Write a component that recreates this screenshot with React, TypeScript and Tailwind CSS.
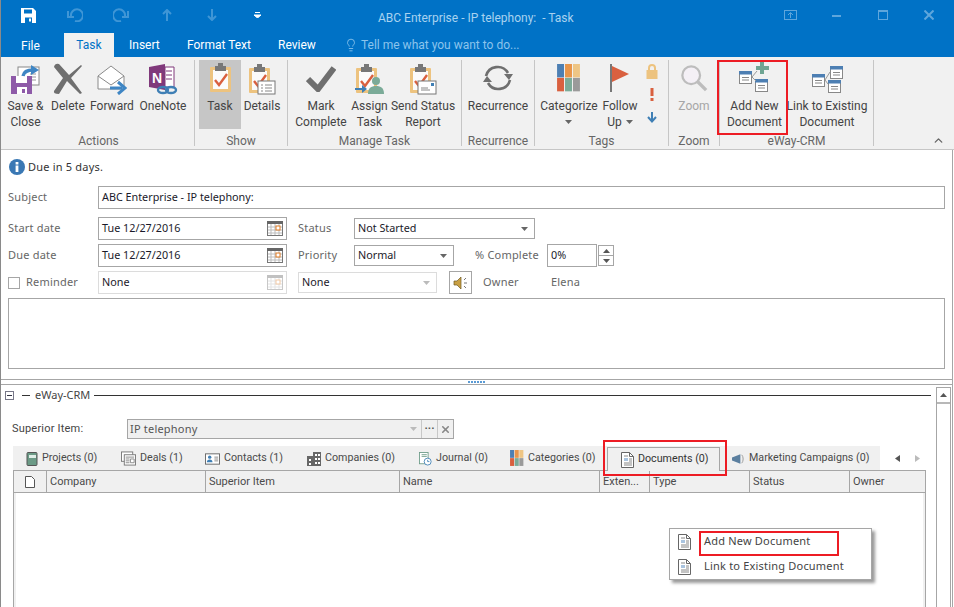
import { ChevronUp, Lightbulb, X } from "lucide-react";

const noto = "font-['Noto_Sans','Liberation_Sans',sans-serif]";
const roboto = "font-['Roboto','Liberation_Sans',sans-serif]";

function Clipboard({ x = 0 }: { x?: number }) {
  return (
    <g transform={`translate(${x} 0)`}>
      <rect x="1" y="4" width="21" height="25" rx="1" fill="#edc37f" />
      <rect x="4" y="7" width="15" height="19" fill="#fbfbfb" />
      <rect x="6" y="3" width="11" height="5" fill="#777" />
      <rect x="9" y="0" width="5" height="4" fill="#777" />
      <path d="M6 17l4 5 8-11" fill="none" stroke="#d9603f" strokeWidth="2.4" />
    </g>
  );
}

function SaveCloseIcon() {
  return (
    <svg width="32" height="30" viewBox="0 0 32 30">
      <rect x="8" y="2" width="21" height="18" fill="#fff" stroke="#888" />
      <path d="M20 9h6M20 12h6M20 15h6" stroke="#999" />
      <path d="M1 11h21v18H1z" fill="#8e5aa8" />
      <rect x="6" y="11" width="11" height="7" fill="#fff" />
      <rect x="7" y="22" width="10" height="7" fill="#fff" />
      <rect x="12" y="24" width="3" height="4" fill="#8e5aa8" />
      <path d="M13 11c1-5 5-6 10-6" fill="none" stroke="#3f86c4" strokeWidth="3.4" />
      <path d="M21 0l8 5-8 5z" fill="#3f86c4" />
    </svg>
  );
}

function DeleteIcon() {
  return (
    <svg width="30" height="32" viewBox="0 0 30 32">
      <path d="M1 4Q2 0 6 1L16 12 28 2l1 1-11 12 11 15-2 1-13-13-8 13Q0 31 1 28l9-13z" fill="#6f6f6f" />
    </svg>
  );
}

function ForwardIcon() {
  return (
    <svg width="30" height="30" viewBox="0 0 30 30">
      <path d="M1 11L14 1l13 10v13H1z" fill="#fff" stroke="#8a8a8a" />
      <path d="M1 11l13 9 13-9" fill="none" stroke="#8a8a8a" />
      <path d="M13 23h12" stroke="#3f86c4" strokeWidth="3" />
      <path d="M21 17l7 6-7 6" fill="none" stroke="#3f86c4" strokeWidth="3" />
    </svg>
  );
}

function OneNoteIcon() {
  return (
    <svg width="30" height="32" viewBox="0 0 30 32">
      <path d="M1 4l16-3v26l-16-3z" fill="#80397b" />
      <path d="M17 4h9v20h-9z" fill="#fff" stroke="#80397b" />
      <path d="M18 8h6M18 12h6M18 16h6" stroke="#80397b" />
      <text x="4" y="20" fontSize="14" fontWeight="700" fill="#fff" fontFamily="Liberation Sans">N</text>
      <ellipse cx="15" cy="27" rx="5" ry="3" fill="none" stroke="#3f7fb5" strokeWidth="2.4" />
      <ellipse cx="23" cy="27" rx="5" ry="3" fill="none" stroke="#3f7fb5" strokeWidth="2.4" />
    </svg>
  );
}

function TaskIcon() {
  return (
    <svg width="23" height="30" viewBox="0 0 23 30" className="mb-[2px]">
      <Clipboard />
    </svg>
  );
}

function DetailsIcon() {
  return (
    <svg width="28" height="31" viewBox="0 0 28 31">
      <Clipboard />
      <rect x="10" y="17" width="17" height="13" fill="#fff" stroke="#777" />
      <path d="M13 21h2M17 21h7M13 24h2M17 24h7M13 27h2M17 27h7" stroke="#888" />
    </svg>
  );
}

function MarkCompleteIcon() {
  return (
    <svg width="30" height="26" viewBox="0 0 30 26" className="mb-[3px]">
      <path d="M2 13l10 10L28 2" fill="none" stroke="#6f6f6f" strokeWidth="6" />
    </svg>
  );
}

function AssignIcon() {
  return (
    <svg width="30" height="31" viewBox="0 0 30 31">
      <Clipboard />
      <circle cx="21" cy="17" r="4" fill="#7bab98" />
      <path d="M13 30c0-6 3-8 8-8s8 2 8 8z" fill="#7bab98" />
      <path d="M0 25h8" stroke="#3f7fb5" strokeWidth="2" />
      <path d="M7 21l5 4-5 4z" fill="#3f7fb5" />
    </svg>
  );
}

function StatusReportIcon() {
  return (
    <svg width="28" height="31" viewBox="0 0 28 31">
      <Clipboard />
      <rect x="9" y="17" width="18" height="13" fill="#fff" stroke="#777" />
      <rect x="22" y="19" width="3" height="3" fill="#3f7fb5" />
      <path d="M12 24h7M12 26h9" stroke="#888" />
    </svg>
  );
}

function RecurrenceIcon() {
  return (
    <svg width="32" height="28" viewBox="0 0 32 28" className="mb-[3px]">
      <path d="M4 12A12 12 0 0 1 26 9M28 16A12 12 0 0 1 6 19" fill="none" stroke="#6f6f6f" strokeWidth="2.6" />
      <path d="M22 10h9l-4 6zM1 18h9l-5-6z" fill="#6f6f6f" />
    </svg>
  );
}

function CategorizeIcon({ size = 24, className = "" }: { size?: number; className?: string }) {
  const colors = ["#4d7fb3", "#e8954a", "#eec584", "#d9603f", "#7bab98", "#9a9a9a"];
  return (
    <svg width={size} height={size * 1.16} viewBox="0 0 24 28" className={className}>
      {colors.map((c, i) => (
        <rect key={c} x={(i % 3) * 8} y={i < 3 ? 0 : 14} width="7" height="13.5" fill={c} />
      ))}
    </svg>
  );
}

function FlagIcon() {
  return (
    <svg width="22" height="29" viewBox="0 0 22 29" className="mb-[2px]">
      <rect x="1" y="0" width="2" height="28" fill="#777" />
      <path d="M3 2l17 8-17 8z" fill="#d9603f" />
    </svg>
  );
}

function ZoomIcon() {
  return (
    <svg width="28" height="28" viewBox="0 0 30 30" className="mb-[3px]">
      <circle cx="12" cy="12" r="9.5" fill="#f4f0f6" stroke="#bdbdbd" strokeWidth="2.4" />
      <path d="M19 19l9 9" stroke="#bdbdbd" strokeWidth="3.6" />
    </svg>
  );
}

function FormBox({ x, y }: { x: number; y: number }) {
  return (
    <g transform={`translate(${x} ${y})`}>
      <rect x="0.5" y="0.5" width="12" height="12" fill="#fff" stroke="#888" />
      <rect x="0" y="0" width="13" height="3.5" fill="#4d7fb3" />
      <path d="M3 6.5h7M3 9h7" stroke="#888" />
    </g>
  );
}

function AddDocIcon() {
  return (
    <svg width="31" height="31" viewBox="0 0 31 31" className="mb-[3px]">
      <FormBox x={0} y={10} />
      <FormBox x={16} y={18} />
      <path d="M13 16l5-6M13 16l4 4" stroke="#999" fill="none" />
      <path d="M21 1h4v4h5v4h-5v4h-4V9h-4V5h4z" fill="#6fa593" />
    </svg>
  );
}

function LinkDocIcon() {
  return (
    <svg width="31" height="31" viewBox="0 0 31 31" className="mb-[2px]">
      <FormBox x={0} y={12} />
      <FormBox x={18} y={4} />
      <FormBox x={16} y={18} />
      <path d="M13 18l5-8M13 18l3 4" stroke="#999" fill="none" />
    </svg>
  );
}

function DocIcon() {
  return (
    <svg width="13" height="16" viewBox="0 0 13 16">
      <path d="M0.5 0.5h8l4 4v11H0.5z" fill="#fff" stroke="#666" />
      <path d="M8.5 0.5v4h4" fill="none" stroke="#666" />
      <rect x="3" y="6" width="4" height="3" fill="#a9c4e0" />
      <path d="M3 4h4M8 7h3M8 9h3M3 11h8M3 13h8" stroke="#888" />
    </svg>
  );
}

function CalendarIcon({ disabled = false }: { disabled?: boolean }) {
  return (
    <svg width="16" height="15" viewBox="0 0 16 15" className={`mt-px ${disabled ? "opacity-40" : ""}`}>
      <rect x="0.5" y="0.5" width="15" height="14" fill="#fff" stroke="#777" />
      <rect x="0" y="0" width="16" height="3" fill="#666" />
      <path d="M1 6h14M1 9h14M1 12h14M4 3v11M8 3v11M12 3v11" stroke="#bbb" />
      <rect x="9" y="5" width="4" height="4" fill="#fff" stroke="#e07b22" />
    </svg>
  );
}

function TinyTriangle({ className = "" }: { className?: string }) {
  return (
    <svg width="7" height="4" viewBox="0 0 7 4" className={className}>
      <path d="M0 0h7L3.5 4z" fill="currentColor" />
    </svg>
  );
}

function RibbonButton({
  icon,
  lines,
  width,
  active = false,
  muted = false,
  caret = false,
}: {
  icon: React.ReactNode;
  lines: React.ReactNode[];
  width: number;
  active?: boolean;
  muted?: boolean;
  caret?: boolean;
}) {
  return (
    <div
      className={`flex h-[69px] shrink-0 flex-col items-center ${active ? "bg-[#c6c6c6]" : ""}`}
      style={{ width }}
    >
      <div className="flex h-[36px] shrink-0 items-end justify-center pb-px">{icon}</div>
      <div className={`mt-[2px] whitespace-nowrap text-center text-[12px] leading-[16px] ${muted ? "text-[#a6a6a6]" : "text-[#444]"}`}>
        {lines.map((l, i) => (
          <div key={i} className="flex items-center justify-center gap-[4px]">
            {l}
          </div>
        ))}
        {caret && (
          <div className="flex h-[16px] items-center justify-center">
            <TinyTriangle className="text-[#666]" />
          </div>
        )}
      </div>
    </div>
  );
}

function RibbonGroup({
  label,
  width,
  inset = 0,
  children,
}: {
  label: string;
  width: number;
  inset?: number;
  children: React.ReactNode;
}) {
  return (
    <div className="my-[3px] flex shrink-0 flex-col border-r border-[#c6c6c6]" style={{ width }}>
      <div className="flex h-[69px]" style={{ paddingLeft: inset }}>
        {children}
      </div>
      <div className="mt-[4px] text-center text-[12px] leading-[16px] text-[#666]">{label}</div>
    </div>
  );
}

function Ribbon() {
  return (
    <div className="flex h-[93px] shrink-0 border-b border-[#c6c6c6] bg-[#f1f1f1] pl-[2px]">
      <RibbonGroup label="Actions" width={192}>
        <RibbonButton icon={<SaveCloseIcon />} lines={["Save &", "Close"]} width={45} />
        <RibbonButton icon={<DeleteIcon />} lines={["Delete"]} width={40} />
        <RibbonButton icon={<ForwardIcon />} lines={["Forward"]} width={48} />
        <RibbonButton icon={<OneNoteIcon />} lines={["OneNote"]} width={54} />
      </RibbonGroup>
      <RibbonGroup label="Show" width={93} inset={4}>
        <RibbonButton icon={<TaskIcon />} lines={["Task"]} width={42} active />
        <RibbonButton icon={<DetailsIcon />} lines={["Details"]} width={42} />
      </RibbonGroup>
      <RibbonGroup label="Manage Task" width={174} inset={3}>
        <RibbonButton icon={<MarkCompleteIcon />} lines={["Mark", "Complete"]} width={60} />
        <RibbonButton icon={<AssignIcon />} lines={["Assign", "Task"]} width={37} />
        <RibbonButton icon={<StatusReportIcon />} lines={["Send Status", "Report"]} width={70} />
      </RibbonGroup>
      <RibbonGroup label="Recurrence" width={73} inset={1}>
        <RibbonButton icon={<RecurrenceIcon />} lines={["Recurrence"]} width={70} />
      </RibbonGroup>
      <RibbonGroup label="Tags" width={134} inset={2}>
        <RibbonButton icon={<CategorizeIcon className="mb-[3px]" />} lines={["Categorize"]} width={64} caret />
        <RibbonButton
          icon={<FlagIcon />}
          lines={[
            "Follow",
            <>
              Up
              <TinyTriangle className="text-[#666]" />
            </>,
          ]}
          width={38}
        />
        <div className="flex w-[26px] flex-col items-center pt-[4px]">
          <svg width="12" height="15" viewBox="0 0 12 15">
            <path d="M3 7V4a3 3 0 0 1 6 0v3" fill="none" stroke="#edc37f" strokeWidth="2" />
            <rect x="0.5" y="6" width="11" height="9" fill="#edc37f" />
          </svg>
          <svg width="4" height="13" viewBox="0 0 4 13" className="mt-[9px]">
            <path d="M0.5 0h3v8h-3zM0.5 10h3v3h-3z" fill="#d9603f" />
          </svg>
          <svg width="10" height="11" viewBox="0 0 10 11" className="mt-[11px]">
            <path d="M5 0v9M1 5l4 4.5L9 5" fill="none" stroke="#3f7fb5" strokeWidth="2" />
          </svg>
        </div>
      </RibbonGroup>
      <RibbonGroup label="Zoom" width={51}>
        <RibbonButton icon={<ZoomIcon />} lines={["Zoom"]} width={50} muted />
      </RibbonGroup>
      <RibbonGroup label="eWay-CRM" width={154}>
        <RibbonButton icon={<AddDocIcon />} lines={["Add New", "Document"]} width={69} />
        <RibbonButton icon={<LinkDocIcon />} lines={["Link to Existing", "Document"]} width={76} />
      </RibbonGroup>
      <div className="flex flex-1 items-end justify-end pb-[2px] pr-[9px]">
        <ChevronUp size={13} strokeWidth={2.5} className="text-[#666]" />
      </div>
    </div>
  );
}

function TitleBar() {
  return (
    <div className="flex h-[57px] shrink-0 flex-col bg-[#0072c6] text-white">
      <div className="flex h-[33px] items-center pb-[3px]">
        <svg width="15" height="15" viewBox="0 0 15 15" className="ml-[20px]">
          <path d="M0 0h12l3 3v12H0z" fill="#fff" />
          <path d="M3 1.5h8v4H3zM4 9.5h7V15H4z" fill="#0072c6" />
          <rect x="8" y="10.5" width="2" height="3" fill="#fff" />
        </svg>
        <svg width="16" height="14" viewBox="0 0 16 14" className="ml-[31px] text-[#3f96d6]">
          <path d="M4 8A6 6 0 1 1 8 13M1 3v6h6" fill="none" stroke="currentColor" strokeWidth="2" />
        </svg>
        <svg width="16" height="14" viewBox="0 0 16 14" className="ml-[30px] text-[#3f96d6]">
          <path d="M12 8A6 6 0 1 0 8 13M15 3v6H9" fill="none" stroke="currentColor" strokeWidth="2" />
        </svg>
        <svg width="10" height="12" viewBox="0 0 10 12" className="ml-[33px] text-[#3f96d6]">
          <path d="M5 12V1M1 5l4-4 4 4" fill="none" stroke="currentColor" strokeWidth="2" />
        </svg>
        <svg width="10" height="12" viewBox="0 0 10 12" className="ml-[35px] text-[#3f96d6]">
          <path d="M5 0v11M1 7l4 4 4-4" fill="none" stroke="currentColor" strokeWidth="2" />
        </svg>
        <svg width="7" height="6" viewBox="0 0 7 6" className="ml-[37px]">
          <path d="M1 0.5h5M0 3h7L3.5 6z" stroke="#fff" fill="#fff" strokeWidth="1" />
        </svg>
        <div className="ml-[117px] mt-[6px] whitespace-nowrap text-[12px] leading-[20px] text-[#a8d2f0]">
          ABC Enterprise - IP telephony:&nbsp; - Task
        </div>
        <div className="ml-auto mr-[20px] flex items-center text-[#5ea6dc]">
          <svg width="13" height="10" viewBox="0 0 13 10">
            <rect x="0.5" y="0.5" width="12" height="9" fill="none" stroke="currentColor" />
            <path d="M6.5 8V3M4 5l2.5-2.5L9 5" fill="none" stroke="currentColor" />
          </svg>
          <svg width="9" height="2" viewBox="0 0 9 2" className="ml-[35px] mt-[2px]">
            <rect width="9" height="2" fill="currentColor" />
          </svg>
          <svg width="10" height="10" viewBox="0 0 10 10" className="ml-[37px]">
            <rect x="0.5" y="0.5" width="9" height="9" fill="none" stroke="currentColor" />
            <rect x="0" y="0" width="10" height="2" fill="currentColor" />
          </svg>
          <svg width="10" height="10" viewBox="0 0 10 10" className="ml-[36px]">
            <path d="M0.5 0.5l9 9M9.5 0.5l-9 9" stroke="currentColor" strokeWidth="2" />
          </svg>
        </div>
      </div>
      <div className="flex h-[24px] items-end text-[12px]">
        <div className="flex h-[24px] w-[63px] items-center pl-[20px] pt-[2px]">File</div>
        <div className="flex h-[24px] w-[50px] items-center justify-center bg-[#f1f1f1] text-[#0072c6]">Task</div>
        <div className="flex h-[24px] w-[73px] items-center pl-[15px]">Insert</div>
        <div className="flex h-[24px] w-[91px] items-center">Format Text</div>
        <div className="flex h-[24px] w-[66px] items-center">Review</div>
        <div className="flex h-[24px] items-center gap-[3px] text-[#8cc4ec]">
          <Lightbulb size={14} strokeWidth={1.5} />
          Tell me what you want to do...
        </div>
      </div>
    </div>
  );
}

function Field({ width, value, disabled = false, calendar = false }: { width: number; value: string; disabled?: boolean; calendar?: boolean }) {
  return (
    <div
      className={`flex h-[23px] shrink-0 items-center justify-between border pb-px pl-[3px] pr-[3px] text-[10.8px] text-[#1a1a2a] ${disabled ? "border-[#dcdcdc]" : "border-[#a6a6a6]"}`}
      style={{ width }}
    >
      <span>{value}</span>
      {calendar && <CalendarIcon disabled={disabled} />}
    </div>
  );
}

function Select({ width, value, disabled = false }: { width: number; value: string; disabled?: boolean }) {
  return (
    <div
      className={`flex h-[21px] shrink-0 items-center justify-between border pl-[3px] pr-[6px] text-[10.8px] text-[#1a1a2a] ${disabled ? "border-[#dcdcdc]" : "border-[#a6a6a6]"}`}
      style={{ width }}
    >
      <span>{value}</span>
      <TinyTriangle className={disabled ? "text-[#bbb]" : "text-[#666]"} />
    </div>
  );
}

function Form() {
  const label = "text-[11px] text-[#666] tracking-[0.2px]";
  return (
    <div className={`flex h-[230px] shrink-0 flex-col border-b border-[#a6a6a6] pl-[7px] ${noto}`}>
      <div className="flex h-[36px] items-center gap-[3px] pb-[2px] pl-px">
        <svg width="16" height="16" viewBox="0 0 16 16">
          <circle cx="8" cy="8" r="8" fill="#3a78b4" />
          <rect x="6.6" y="6.5" width="2.8" height="6.5" fill="#fff" />
          <rect x="6.6" y="3" width="2.8" height="2.5" fill="#fff" />
        </svg>
        <span className="text-[11px] tracking-[0.2px] text-[#333]">Due in 5 days.</span>
      </div>
      <div className="flex items-center">
        <span className={`${label} w-[90px]`}>Subject</span>
        <Field width={847} value="ABC Enterprise - IP telephony:" />
      </div>
      <div className="mt-[8px] flex items-center">
        <span className={`${label} w-[90px]`}>Start date</span>
        <Field width={189} value="Tue 12/27/2016" calendar />
        <span className={`${label} ml-[11px] w-[56px]`}>Status</span>
        <Select width={181} value="Not Started" />
      </div>
      <div className="mt-[4px] flex items-center">
        <span className={`${label} w-[90px]`}>Due date</span>
        <Field width={189} value="Tue 12/27/2016" calendar />
        <span className={`${label} ml-[11px] w-[56px]`}>Priority</span>
        <Select width={100} value="Normal" />
        <span className={`${label} ml-[21px] w-[72px]`}>% Complete</span>
        <Field width={50} value="0%" />
        <div className="ml-px flex h-[21px] w-[16px] flex-col border border-[#a6a6a6]">
          <div className="flex flex-1 items-center justify-center border-b border-[#a6a6a6]">
            <TinyTriangle className="rotate-180 text-[#555]" />
          </div>
          <div className="flex flex-1 items-center justify-center">
            <TinyTriangle className="text-[#555]" />
          </div>
        </div>
      </div>
      <div className="mt-[4px] flex items-center">
        <div className="h-[12px] w-[12px] border border-[#a6a6a6]" />
        <span className={`${label} ml-[6px] w-[72px]`}>Reminder</span>
        <Field width={189} value="None" disabled calendar />
        <div className="ml-[11px]">
          <Select width={139} value="None" disabled />
        </div>
        <div className="ml-[12px] flex h-[23px] w-[23px] items-center justify-center border border-[#a6a6a6]">
          <svg width="16" height="14" viewBox="0 0 16 14">
            <path d="M1 5h3l4-4v12l-4-4H1z" fill="#c9a043" stroke="#6f5a24" strokeWidth="0.7" />
            <path d="M11 4l2-2M11 7h3M11 10l2 2" stroke="#777" />
          </svg>
        </div>
        <span className={`${label} ml-[11px] w-[68px]`}>Owner</span>
        <span className={label}>Elena</span>
      </div>
      <div className="mt-[4px] h-[71px] w-[937px] border border-[#a6a6a6]" />
    </div>
  );
}

function Tab({ icon, label, width, inset = 13, active = false }: { icon: React.ReactNode; label: string; width: number; inset?: number; active?: boolean }) {
  return (
    <div
      className={`flex h-[24px] shrink-0 items-center gap-[4px] whitespace-nowrap text-[10.7px] ${
        active ? "relative z-10 -mb-px mt-px border-x border-t border-[#a6a6a6] bg-[#f0f0f0] text-[#333]" : "pt-px text-[#4a4a4a]"
      }`}
      style={{ width, paddingLeft: inset }}
    >
      {icon}
      {label}
    </div>
  );
}

const columns = [
  { name: "Company", w: 159 },
  { name: "Superior Item", w: 194 },
  { name: "Name", w: 200 },
  { name: "Exten...", w: 50 },
  { name: "Type", w: 100 },
  { name: "Status", w: 100 },
  { name: "Owner", w: 75 },
];

function CrmPanel() {
  return (
    <div className="flex min-h-0 flex-1">
      <div className="flex w-[930px] shrink-0 flex-col pl-[4px]">
        <div className="mt-[5px] flex h-[11px] items-center">
          <div className="flex h-[9px] w-[9px] items-center justify-center border border-[#778] bg-white">
            <div className="h-px w-[5px] bg-[#334]" />
          </div>
          <div className="ml-[8px] h-px w-[8px] bg-[#333]" />
          <span className={`ml-[5px] text-[11px] text-[#444] ${noto}`}>eWay-CRM</span>
          <div className="ml-[4px] h-px flex-1 bg-[#333]" />
        </div>
        <div className="ml-[7px] mt-[18px] flex h-[20px] items-center">
          <span className="w-[115px] pt-px text-[11px] tracking-[0.2px] text-[#444]">Superior Item:</span>
          <div className="flex h-[20px] w-[327px] items-center border border-[#a6a6a6] bg-[#f0f0f0]">
            <span className={`flex-1 pl-[2px] text-[11px] tracking-[0.2px] text-[#555] ${noto}`}>IP telephony</span>
            <div className="flex h-full w-[16px] items-center justify-center border-r border-[#c8c8c8]">
              <TinyTriangle className="text-[#bbb]" />
            </div>
            <div className="flex h-full w-[16px] items-center justify-center border-r border-[#c8c8c8] pb-[2px] text-[11px] font-bold leading-none text-[#555]">
              ···
            </div>
            <div className="flex h-full w-[15px] items-center justify-center">
              <X size={11} strokeWidth={3.5} className="text-[#888]" />
            </div>
          </div>
        </div>
        <div className="ml-[8px] mt-[7px] flex h-[24px]">
          <div className="flex w-[867px] bg-[#f0f0f0]">
            <Tab
              label="Projects (0)"
              width={95}
              icon={
                <svg width="12" height="14" viewBox="0 0 12 14">
                  <rect x="1" y="0.5" width="10" height="13" rx="1" fill="#6b9a86" stroke="#555" />
                  <rect x="3" y="3" width="7" height="3" fill="#dfeee7" />
                </svg>
              }
            />
            <Tab
              label="Deals (1)"
              width={84}
              icon={
                <svg width="15" height="15" viewBox="0 0 16 15">
                  <rect x="0.5" y="0.5" width="12" height="10" fill="#fff" stroke="#777" />
                  <rect x="3.5" y="3.5" width="12" height="11" fill="#fff" stroke="#777" />
                  <path d="M5 6h9M5 8h4M5 10h4M5 12h4M10 8h4v4h-4z" stroke="#888" fill="none" />
                </svg>
              }
            />
            <Tab
              label="Contacts (1)"
              width={102}
              icon={
                <svg width="15" height="12" viewBox="0 0 16 12">
                  <rect x="0.5" y="0.5" width="15" height="11" fill="#fff" stroke="#666" />
                  <circle cx="5" cy="4" r="1.8" fill="#3f7fb5" />
                  <path d="M2 9.5c0-2 1-3 3-3s3 1 3 3z" fill="#3f7fb5" />
                  <path d="M10 4h4M10 6h4M10 8h4" stroke="#888" />
                </svg>
              }
            />
            <Tab
              label="Companies (0)"
              width={112}
              icon={
                <svg width="14" height="14" viewBox="0 0 14 14">
                  <path d="M0 4h6V0h8v14H0z" fill="#666" />
                  <path d="M8 2h2v2H8zM11 2h2v2h-2zM2 7h2v2H2zM8 6h2v2H8zM11 6h2v2h-2zM2 11h2v2H2zM8 10h2v2H8zM11 10h2v2h-2z" fill="#fff" />
                </svg>
              }
            />
            <Tab
              label="Journal (0)"
              width={91}
              icon={
                <svg width="13" height="14" viewBox="0 0 15 16">
                  <rect x="0.5" y="0.5" width="10" height="13" fill="#fff" stroke="#6b9a86" />
                  <path d="M3 3h6M3 5h6" stroke="#6b9a86" />
                  <circle cx="10" cy="11" r="4" fill="#fff" stroke="#3f7fb5" />
                  <path d="M10 9v2h2" stroke="#3f7fb5" fill="none" />
                </svg>
              }
            />
            <Tab label="Categories (0)" width={110} icon={<CategorizeIcon size={14} />} />
            <Tab label="Documents (0)" width={113} inset={13} active icon={<DocIcon />} />
            <Tab
              label="Marketing Campaigns (0)"
              width={160}
              inset={12}
              icon={
                <svg width="13" height="12" viewBox="0 0 14 12">
                  <path d="M0 4.5L9 1v10L0 7.5z" fill="#5b7f9f" />
                  <path d="M10.5 1.5c2 2 2 7 0 9" fill="none" stroke="#999" />
                </svg>
              }
            />
          </div>
          <div className="ml-[15px] flex items-center gap-[15px]">
            <svg width="5" height="7" viewBox="0 0 5 7"><path d="M5 0v7L0 3.5z" fill="#555" /></svg>
            <svg width="5" height="7" viewBox="0 0 5 7"><path d="M0 0v7l5-3.5z" fill="#bbb" /></svg>
          </div>
        </div>
        <div className="ml-[8px] flex min-h-0 w-[913px] flex-1 flex-col border-x border-[#a6a6a6]">
          <div className="flex h-[23px] shrink-0 border-y border-[#a6a6a6] bg-[#f0f0f0] text-[11px] text-[#4a4a4a]">
            <div className="flex w-[33px] items-center justify-center border-r border-[#a6a6a6]">
              <svg width="10" height="12" viewBox="0 0 10 12">
                <path d="M0.5 0.5h6l3 3v8h-9z" fill="#fff" stroke="#555" />
              </svg>
            </div>
            {columns.map((c) => (
              <div key={c.name} className="flex items-center border-r border-[#a6a6a6] pl-[3px] pt-[2px] last:border-r-0" style={{ width: c.w }}>
                {c.name}
              </div>
            ))}
          </div>
          <div className="flex-1 shadow-[inset_2px_0_0_#f0f0f0,inset_-2px_0_0_#f0f0f0]" />
        </div>
      </div>
      <div className="ml-[5px] mt-[2px] flex w-[15px] shrink-0 flex-col border-x border-t border-[#a6a6a6]">
        <div className="flex h-[16px] items-center justify-center border-b-2 border-[#b8b8b8]">
          <TinyTriangle className="rotate-180 text-[#555]" />
        </div>
      </div>
    </div>
  );
}

function Annotations() {
  return (
    <>
      <div className="absolute left-[716px] top-[60px] h-[75px] w-[71px] border-2 border-[#ed1c24]" />
      <div className="absolute left-[602px] top-[440px] z-20 h-[36px] w-[124px] border-2 border-[#ed1c24]" />
      <div className={`absolute left-[668px] top-[528px] w-[203px] border border-[#a6a6a6] bg-white text-[11px] text-[#444] shadow-[3px_3px_3px_rgba(0,0,0,0.4)] ${noto}`}>
        {["Add New Document", "Link to Existing Document"].map((t) => (
          <div key={t} className="flex h-[25px] items-center pl-[8px] tracking-[0.2px]">
            <DocIcon />
            <span className="ml-[13px]">{t}</span>
          </div>
        ))}
      </div>
      <div className="absolute left-[698px] top-[531px] h-[25px] w-[140px] border-2 border-[#ed1c24]" />
    </>
  );
}

export default function App() {
  return (
    <div className={`relative flex h-[607px] w-[954px] flex-col overflow-hidden border-l border-[#8a8a8a] bg-white ${roboto}`}>
      <TitleBar />
      <Ribbon />
      <div className="flex min-h-0 w-[952px] flex-1 flex-col border-r border-[#a6a6a6]">
        <Form />
        <div className="flex h-[5px] shrink-0 items-center justify-center border-b border-[#a6a6a6]">
          <div className="h-[2px] w-[18px] bg-[repeating-linear-gradient(90deg,#5b9bd5_0,#5b9bd5_2px,transparent_2px,transparent_3px)]" />
        </div>
        <CrmPanel />
      </div>
      <Annotations />
    </div>
  );
}
